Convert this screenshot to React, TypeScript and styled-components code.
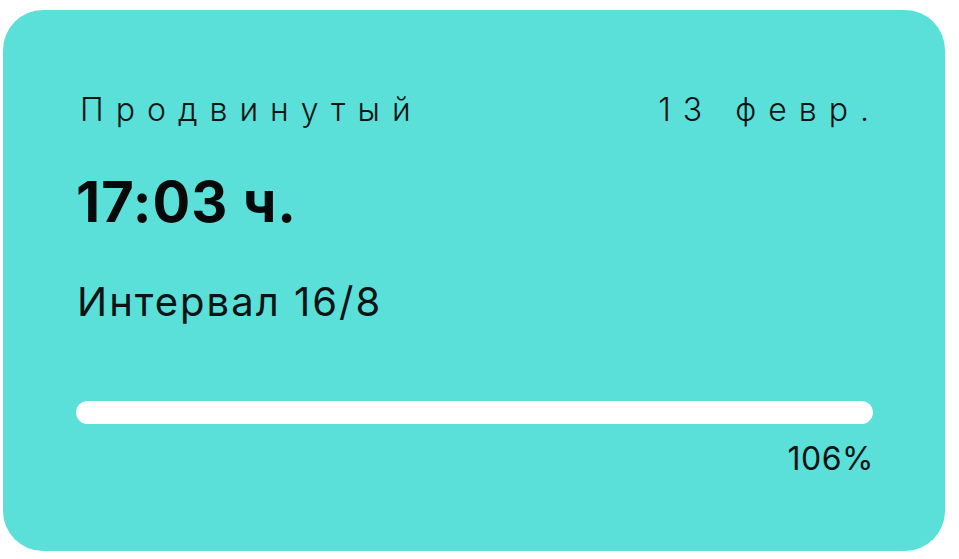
import styled, { createGlobalStyle } from 'styled-components';

const Global = createGlobalStyle`
  html, body {
    margin: 0;
    padding: 0;
    background: #ffffff;
  }
  body {
    font-family: Inter, "Noto Sans", sans-serif;
    color: #0b1414;
  }
`;

interface icard {
  level?: string;
  date?: string;
  time?: string;
  plan?: string;
  percent?: number;
}

const Card = styled.div`
  box-sizing: border-box;
  margin: 10px 0 0 3px;
  width: 942px;
  height: 541px;
  padding: 80px 72px 0 73px;
  background-color: #5ae0d9;
  border-radius: 40px;
  display: flex;
  flex-direction: column;
`;

const Head = styled.div`
  display: flex;
  justify-content: space-between;
  align-items: baseline;
`;

const Label = styled.div<{ $end?: boolean }>`
  font-size: 32px;
  line-height: 40px;
  font-weight: 300;
  letter-spacing: 12px;
  margin-left: ${(p) => (p.$end ? '0' : '4px')};
  margin-right: ${(p) => (p.$end ? '-8px' : '0')};
`;

const Time = styled.div`
  margin-top: 40px;
  font-size: 56px;
  line-height: 64px;
  font-weight: 700;
  letter-spacing: 1px;
  color: #050909;
`;

const Plan = styled.div`
  margin-top: 44px;
  margin-left: 1px;
  font-size: 40px;
  line-height: 48px;
  font-weight: 400;
  letter-spacing: 2px;
`;

const Track = styled.div`
  margin-top: 75px;
  height: 23px;
  border-radius: 12px;
  background: rgba(255, 255, 255, 0.35);
  overflow: hidden;
`;

const Fill = styled.div`
  height: 100%;
  background: #ffffff;
  border-radius: 12px;
`;

const Percent = styled.div`
  margin-top: 15px;
  margin-right: -1px;
  text-align: right;
  font-size: 32px;
  line-height: 40px;
  font-weight: 400;
  letter-spacing: 0.5px;
`;

const App: React.FC<icard> = ({
  level = 'Продвинутый',
  date = '13 февр.',
  time = '17:03 ч.',
  plan = 'Интервал 16/8',
  percent = 106,
}) => {
  return (
    <>
      <Global />
      <Card>
        <Head>
          <Label>{level}</Label>
          <Label $end>{date}</Label>
        </Head>
        <Time>{time}</Time>
        <Plan>{plan}</Plan>
        <Track>
          <Fill style={{ width: `${Math.min(percent, 100)}%` }} />
        </Track>
        <Percent>{percent}%</Percent>
      </Card>
    </>
  );
};

export default App;
